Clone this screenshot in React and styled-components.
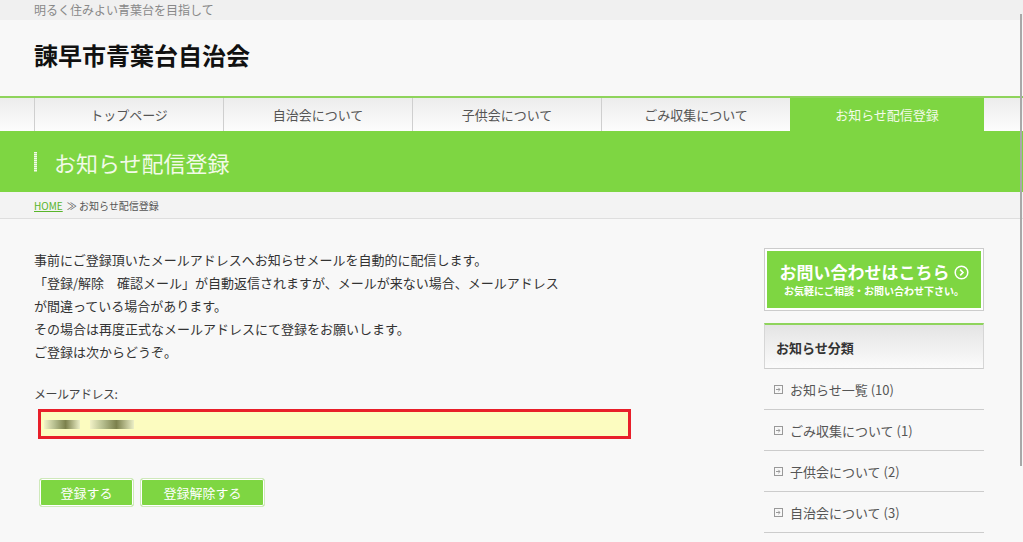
import React from 'react';
import styled, { createGlobalStyle } from 'styled-components';

const Global = createGlobalStyle`
  html, body { margin: 0; padding: 0; background: #f8f8f8; }
  body {
    font-family: "Noto Sans CJK JP", "Noto Sans", sans-serif;
    color: #333;
    width: 1023px;
    height: 542px;
    overflow: hidden;
    position: relative;
  }
`;

const GREEN = '#7ed642';

const Inner = styled.div`
  margin-left: 34px;
  width: 950px;
`;

const TopBar = styled.div`
  height: 20px;
  background: #f0f0f0;
`;

const Tagline = styled.div`
  font-size: 12px;
  line-height: 20px;
  color: #888;
`;

const Header = styled.header`
  height: 76px;
  background: #f8f8f8;
`;

const SiteTitle = styled.h1`
  margin: 0;
  padding-top: 22px;
  font-size: 24px;
  line-height: 26px;
  font-weight: 700;
  color: #111;
`;

const Nav = styled.nav`
  border-top: 2px solid #8fd45c;
  height: 33px;
  background: linear-gradient(#ececec, #fdfdfd);
`;

const NavRow = styled.ul`
  display: flex;
  margin: 0 0 0 34px;
  padding: 0;
  width: 950px;
  list-style: none;
  height: 100%;
`;

const NavItem = styled.li`
  flex: ${p => (p.$last ? '1' : '0 0 189px')};
  box-sizing: border-box;
  border-left: ${p => (p.$active ? 'none' : '1px solid #cfcfcf')};
  background: ${p => (p.$active ? GREEN : 'transparent')};
  color: ${p => (p.$active ? '#f3fbe9' : '#555')};
  font-size: 13px;
  display: flex;
  align-items: center;
  justify-content: center;
`;

const TitleBar = styled.div`
  height: 61px;
  background: ${GREEN};
  display: flex;
  align-items: center;
`;

const PageTitle = styled.h2`
  margin: 0 0 0 34px;
  display: flex;
  align-items: center;
  font-size: 22px;
  font-weight: 400;
  color: #f2fae8;
  &::before {
    content: '';
    width: 3px;
    height: 20px;
    margin-right: 17px;
    background: repeating-linear-gradient(#f4fbe9 0 1px, #b9e89a 1px 2px);
  }
`;

const Crumbs = styled.div`
  height: 26px;
  background: #f3f3f3;
  border-bottom: 1px solid #dedede;
  font-size: 10px;
  color: #555;
  display: flex;
  align-items: center;
`;

const HomeLink = styled.a`
  color: #58b52a;
  text-decoration: underline;
  margin-right: 4px;
`;

const Body = styled(Inner)`
  display: grid;
  grid-template-columns: 1fr 220px;
  padding-top: 29px;
`;

const Main = styled.div``;

const Intro = styled.p`
  margin: 0;
  font-size: 13px;
  line-height: 23px;
  color: #333;
`;

const Label = styled.div`
  margin-top: 19px;
  font-size: 12px;
  line-height: 23px;
  letter-spacing: -0.5px;
  color: #444;
`;

const MailInput = styled.div`
  margin: 4px 0 0 4px;
  width: 593px;
  height: 30px;
  box-sizing: border-box;
  border: 3px solid #e81f2a;
  background: #fcfcc0;
  display: flex;
  align-items: center;
  padding-left: 3px;
  gap: 10px;
`;

const Blur = styled.span`
  display: inline-block;
  width: ${p => p.$w}px;
  height: 9px;
  background: linear-gradient(90deg, #efefc8, #a3ad80 30%, #5c6230 60%, #e8ecc8);
  opacity: 0.8;
`;

const Buttons = styled.div`
  display: flex;
  gap: 6px;
  margin: 39px 0 0 5px;
`;

const Button = styled.button`
  height: 29px;
  width: ${p => p.$w}px;
  box-sizing: border-box;
  border: 1px solid #cfe9bb;
  border-radius: 3px;
  box-shadow: inset 0 0 0 1px #ffffff;
  background: ${GREEN};
  color: #fff;
  font-family: inherit;
  font-size: 13px;
  padding: 0;
`;

const Sidebar = styled.aside``;

const Banner = styled.div`
  height: 63px;
  box-sizing: border-box;
  border: 1px solid #cccccc;
  padding: 2px;
  background: #fff;
`;

const BannerInner = styled.div`
  height: 100%;
  background: ${GREEN};
  color: #fff;
  display: flex;
  flex-direction: column;
  align-items: center;
  justify-content: center;
`;

const BannerTitle = styled.div`
  font-size: 17px;
  font-weight: 700;
  line-height: 22px;
  display: flex;
  align-items: center;
  gap: 4px;
`;

const BannerSub = styled.div`
  font-size: 10px;
  font-weight: 700;
  line-height: 14px;
  margin-top: 1px;
`;

const CatHead = styled.div`
  margin-top: 12px;
  height: 46px;
  box-sizing: border-box;
  border-top: 2px solid #8fd45c;
  border-left: 1px solid #d6d6d6;
  border-right: 1px solid #d6d6d6;
  border-bottom: 1px solid #cccccc;
  background: linear-gradient(#e4e4e4, #fbfbfb);
  font-size: 13px;
  font-weight: 700;
  color: #333;
  display: flex;
  align-items: center;
  padding: 2px 0 0 11px;
`;

const CatList = styled.ul`
  margin: 0;
  padding: 0;
  list-style: none;
`;

const CatItem = styled.li`
  height: 41px;
  box-sizing: border-box;
  border-bottom: 1px solid #cccccc;
  display: flex;
  align-items: center;
  padding: 1px 0 0 10px;
  gap: 7px;
  font-size: 13px;
  color: #555;
`;

const ScrollLine = styled.div`
  position: absolute;
  left: 1020px;
  top: 14px;
  width: 2px;
  height: 452px;
  background: #a8a8a8;
`;

const BoxArrow = () => (
  <svg width="9" height="9" viewBox="0 0 9 9">
    <rect x="0.5" y="0.5" width="8" height="8" fill="none" stroke="#999" />
    <path d="M2 4.5h4M4.3 2.8l1.7 1.7-1.7 1.7" fill="none" stroke="#999" />
  </svg>
);

const CircleArrow = () => (
  <svg width="15" height="15" viewBox="0 0 15 15">
    <circle cx="7.5" cy="7.5" r="6.3" fill="none" stroke="#fff" strokeWidth="1.5" />
    <path d="M6.2 4.6l2.8 2.9-2.8 2.9" fill="none" stroke="#fff" strokeWidth="1.6" />
  </svg>
);

const navItems = ['トップページ', '自治会について', '子供会について', 'ごみ収集について', 'お知らせ配信登録'];
const cats = ['お知らせ一覧 (10)', 'ごみ収集について (1)', '子供会について (2)', '自治会について (3)'];

export default function App() {
  return (
    <>
      <Global />
      <TopBar>
        <Inner>
          <Tagline>明るく住みよい青葉台を目指して</Tagline>
        </Inner>
      </TopBar>
      <Header>
        <Inner>
          <SiteTitle>諫早市青葉台自治会</SiteTitle>
        </Inner>
      </Header>
      <Nav>
        <NavRow>
          {navItems.map((t, i) => (
            <NavItem key={t} $active={i === 4} $last={i === 4}>{t}</NavItem>
          ))}
        </NavRow>
      </Nav>
      <TitleBar>
        <PageTitle>お知らせ配信登録</PageTitle>
      </TitleBar>
      <Crumbs>
        <Inner>
          <HomeLink>HOME</HomeLink>≫ お知らせ配信登録
        </Inner>
      </Crumbs>
      <Body>
        <Main>
          <Intro>
            事前にご登録頂いたメールアドレスへお知らせメールを自動的に配信します。<br />
            「登録/解除　確認メール」が自動返信されますが、メールが来ない場合、メールアドレス<br />
            が間違っている場合があります。<br />
            その場合は再度正式なメールアドレスにて登録をお願いします。<br />
            ご登録は次からどうぞ。
          </Intro>
          <Label>メールアドレス:</Label>
          <MailInput>
            <Blur $w={36} />
            <Blur $w={44} />
          </MailInput>
          <Buttons>
            <Button $w={95}>登録する</Button>
            <Button $w={125}>登録解除する</Button>
          </Buttons>
        </Main>
        <Sidebar>
          <Banner>
            <BannerInner>
              <BannerTitle>お問い合わせはこちら<CircleArrow /></BannerTitle>
              <BannerSub>お気軽にご相談・お問い合わせ下さい。</BannerSub>
            </BannerInner>
          </Banner>
          <CatHead>お知らせ分類</CatHead>
          <CatList>
            {cats.map(c => (
              <CatItem key={c}><BoxArrow />{c}</CatItem>
            ))}
          </CatList>
        </Sidebar>
      </Body>
      <ScrollLine />
    </>
  );
}
